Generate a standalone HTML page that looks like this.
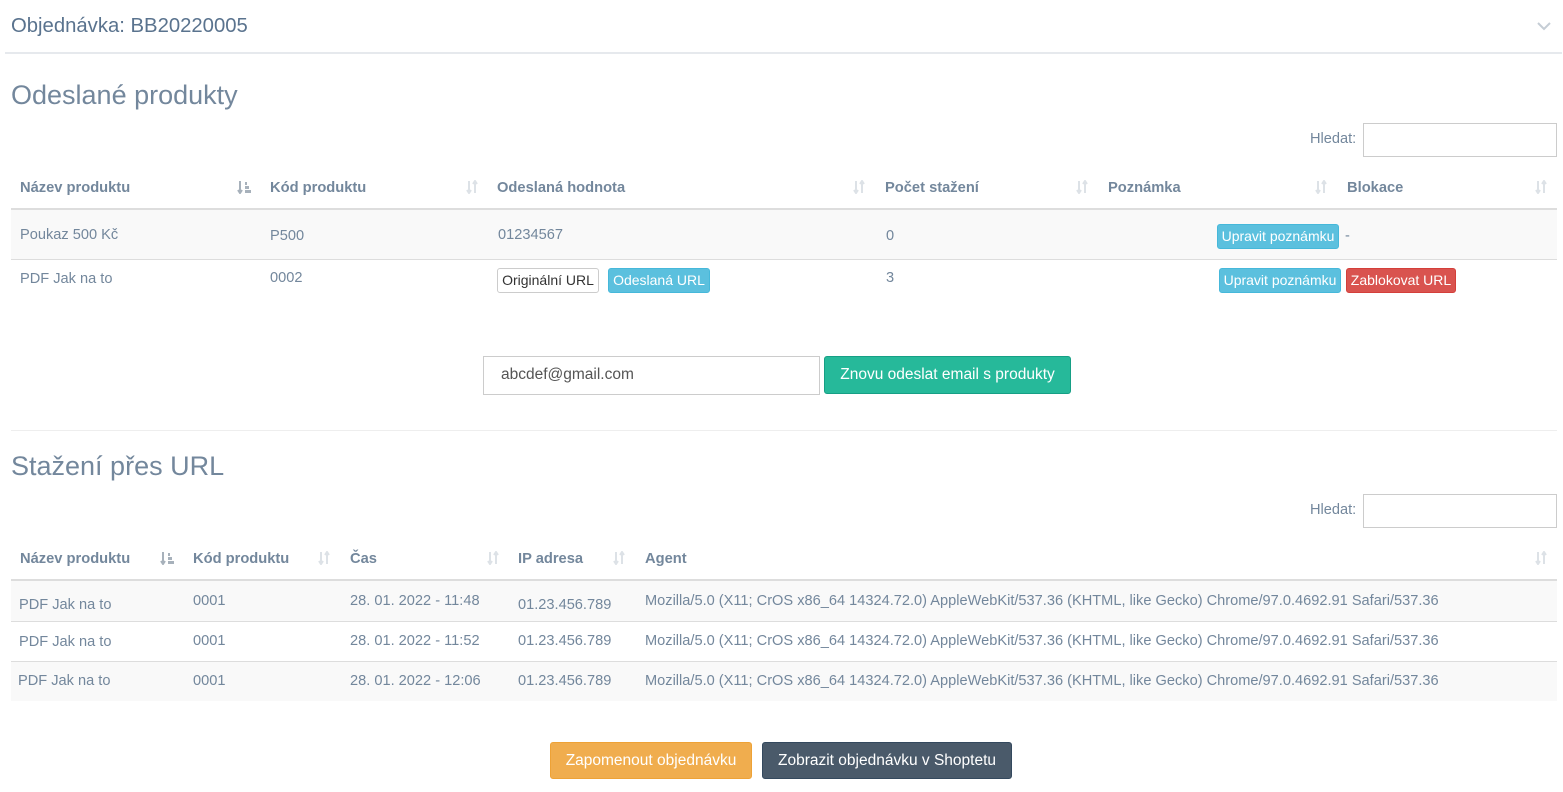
<!DOCTYPE html>
<html><head><meta charset="utf-8"><style>
*{box-sizing:border-box;margin:0;padding:0}
body{width:1563px;height:792px;background:#fff;font-family:"Liberation Sans",Arial,sans-serif;color:#73879C;font-size:14.6px;position:relative;overflow:hidden}
.a{position:absolute;white-space:nowrap}
.h{font-weight:bold;color:#73879C;font-size:14.7px}
.btn{position:absolute;border-radius:3px;font-size:14px;color:#fff;text-align:center;white-space:nowrap}
.info{background:#5bc0de;border:1px solid #46b8da}
.line{position:absolute;left:11px;width:1546px}
.si{position:absolute;width:14px;height:14px}
input{position:absolute;border:1px solid #ccc;background:#fff}
</style></head><body>
<div class="a" style="left:11px;top:15px;font-size:20.3px;color:#5A738E">Objednávka: BB20220005</div>
<svg class="a" style="left:1537px;top:21px" width="14" height="10" viewBox="0 0 14 10"><path d="M1 2l6 6 6-6" stroke="#c5cdd5" stroke-width="2" fill="none"/></svg>
<div class="a" style="left:5px;top:52px;width:1557px;height:2px;background:#E6E9ED"></div>
<div class="a" style="left:11px;top:80px;font-size:27px;color:#73879C">Odeslané produkty</div>
<div class="a" style="left:1310px;top:131px">Hledat:</div>
<input style="left:1363px;top:123px;width:194px;height:34px">

<div class="a h" style="left:20px;top:180px">Název produktu</div>
<div class="a h" style="left:270px;top:180px">Kód produktu</div>
<div class="a h" style="left:497px;top:180px">Odeslaná hodnota</div>
<div class="a h" style="left:885px;top:180px">Počet stažení</div>
<div class="a h" style="left:1108px;top:180px">Poznámka</div>
<div class="a h" style="left:1347px;top:180px">Blokace</div>
<svg class="si" style="left:237px;top:180px" viewBox="0 0 14 14"><path d="M3 1v11M1 10l2 3 2-3" stroke="#a7b1bb" stroke-width="2" fill="none"/><rect x="8" y="2" width="2" height="3" fill="#a7b1bb"/><rect x="8" y="6" width="4" height="3" fill="#a7b1bb"/><rect x="8" y="10" width="6" height="3" fill="#a7b1bb"/></svg>
<svg class="si" style="left:465px;top:180px" viewBox="0 0 14 14"><path d="M4 1v12M2 10l2 3 2-3M10 13V1M8 4l2-3 2 3" stroke="#dde2e7" stroke-width="2" fill="none"/></svg>
<svg class="si" style="left:852px;top:180px" viewBox="0 0 14 14"><path d="M4 1v12M2 10l2 3 2-3M10 13V1M8 4l2-3 2 3" stroke="#dde2e7" stroke-width="2" fill="none"/></svg>
<svg class="si" style="left:1075px;top:180px" viewBox="0 0 14 14"><path d="M4 1v12M2 10l2 3 2-3M10 13V1M8 4l2-3 2 3" stroke="#dde2e7" stroke-width="2" fill="none"/></svg>
<svg class="si" style="left:1314px;top:180px" viewBox="0 0 14 14"><path d="M4 1v12M2 10l2 3 2-3M10 13V1M8 4l2-3 2 3" stroke="#dde2e7" stroke-width="2" fill="none"/></svg>
<svg class="si" style="left:1534px;top:180px" viewBox="0 0 14 14"><path d="M4 1v12M2 10l2 3 2-3M10 13V1M8 4l2-3 2 3" stroke="#dde2e7" stroke-width="2" fill="none"/></svg>
<div class="line" style="top:208px;height:2px;background:#ddd"></div>
<div class="line" style="top:210px;height:49px;background:#f9f9f9"></div>
<div class="line" style="top:259px;height:1px;background:#ddd"></div>
<div class="a" style="left:20px;top:227px">Poukaz 500 Kč</div>
<div class="a" style="left:270px;top:228px">P500</div>
<div class="a" style="left:498px;top:227px">01234567</div>
<div class="a" style="left:886px;top:228px">0</div>
<div class="btn info" style="left:1217px;top:224px;width:122px;height:25px;line-height:23px">Upravit poznámku</div>
<div class="a" style="left:1345px;top:228px">-</div>
<div class="a" style="left:20px;top:271px">PDF Jak na to</div>
<div class="a" style="left:270px;top:270px">0002</div>
<div class="btn" style="left:497px;top:268px;width:102px;height:25px;line-height:23px;border:1px solid #ccc;color:#333;background:#fff">Originální URL</div>
<div class="btn info" style="left:608px;top:268px;width:102px;height:25px;line-height:23px">Odeslaná URL</div>
<div class="a" style="left:886px;top:270px">3</div>
<div class="btn info" style="left:1219px;top:268px;width:122px;height:25px;line-height:23px">Upravit poznámku</div>
<div class="btn" style="left:1346px;top:268px;width:110px;height:25px;line-height:23px;background:#d9534f;border:1px solid #d43f3a">Zablokovat URL</div>

<input style="left:483px;top:356px;width:337px;height:39px">
<div class="a" style="left:501px;top:366px;font-size:15.5px;color:#555">abcdef@gmail.com</div>
<div class="btn" style="left:824px;top:356px;width:247px;height:38px;line-height:36px;background:#26B99A;border:1px solid #169F85;font-size:15.5px">Znovu odeslat email s produkty</div>
<div class="line" style="top:430px;height:1px;background:#eee"></div>

<div class="a" style="left:11px;top:451px;font-size:27px">Stažení přes URL</div>
<div class="a" style="left:1310px;top:502px">Hledat:</div>
<input style="left:1363px;top:494px;width:194px;height:34px">
<div class="a h" style="left:20px;top:551px">Název produktu</div>
<div class="a h" style="left:193px;top:551px">Kód produktu</div>
<div class="a h" style="left:350px;top:551px">Čas</div>
<div class="a h" style="left:518px;top:551px">IP adresa</div>
<div class="a h" style="left:645px;top:551px">Agent</div>
<svg class="si" style="left:160px;top:551px" viewBox="0 0 14 14"><path d="M3 1v11M1 10l2 3 2-3" stroke="#a7b1bb" stroke-width="2" fill="none"/><rect x="8" y="2" width="2" height="3" fill="#a7b1bb"/><rect x="8" y="6" width="4" height="3" fill="#a7b1bb"/><rect x="8" y="10" width="6" height="3" fill="#a7b1bb"/></svg>
<svg class="si" style="left:317px;top:551px" viewBox="0 0 14 14"><path d="M4 1v12M2 10l2 3 2-3M10 13V1M8 4l2-3 2 3" stroke="#dde2e7" stroke-width="2" fill="none"/></svg>
<svg class="si" style="left:486px;top:551px" viewBox="0 0 14 14"><path d="M4 1v12M2 10l2 3 2-3M10 13V1M8 4l2-3 2 3" stroke="#dde2e7" stroke-width="2" fill="none"/></svg>
<svg class="si" style="left:612px;top:551px" viewBox="0 0 14 14"><path d="M4 1v12M2 10l2 3 2-3M10 13V1M8 4l2-3 2 3" stroke="#dde2e7" stroke-width="2" fill="none"/></svg>
<svg class="si" style="left:1534px;top:551px" viewBox="0 0 14 14"><path d="M4 1v12M2 10l2 3 2-3M10 13V1M8 4l2-3 2 3" stroke="#dde2e7" stroke-width="2" fill="none"/></svg>
<div class="line" style="top:579px;height:2px;background:#ddd"></div>
<div class="line" style="top:581px;height:40px;background:#f9f9f9"></div>
<div class="line" style="top:621px;height:1px;background:#ddd"></div>
<div class="line" style="top:661px;height:1px;background:#ddd"></div>
<div class="line" style="top:662px;height:39px;background:#f9f9f9"></div>
<div class="a" style="left:19px;top:597px">PDF Jak na to</div>
<div class="a" style="left:193px;top:593px">0001</div>
<div class="a" style="left:350px;top:593px">28. 01. 2022 - 11:48</div>
<div class="a" style="left:518px;top:597px">01.23.456.789</div>
<div class="a" style="left:645px;top:593px">Mozilla/5.0 (X11; CrOS x86_64 14324.72.0) AppleWebKit/537.36 (KHTML, like Gecko) Chrome/97.0.4692.91 Safari/537.36</div>
<div class="a" style="left:19px;top:634px">PDF Jak na to</div>
<div class="a" style="left:193px;top:633px">0001</div>
<div class="a" style="left:350px;top:633px">28. 01. 2022 - 11:52</div>
<div class="a" style="left:518px;top:633px">01.23.456.789</div>
<div class="a" style="left:645px;top:633px">Mozilla/5.0 (X11; CrOS x86_64 14324.72.0) AppleWebKit/537.36 (KHTML, like Gecko) Chrome/97.0.4692.91 Safari/537.36</div>
<div class="a" style="left:18px;top:673px">PDF Jak na to</div>
<div class="a" style="left:193px;top:673px">0001</div>
<div class="a" style="left:350px;top:673px">28. 01. 2022 - 12:06</div>
<div class="a" style="left:518px;top:673px">01.23.456.789</div>
<div class="a" style="left:645px;top:673px">Mozilla/5.0 (X11; CrOS x86_64 14324.72.0) AppleWebKit/537.36 (KHTML, like Gecko) Chrome/97.0.4692.91 Safari/537.36</div>

<div class="btn" style="left:550px;top:742px;width:202px;height:37px;line-height:35px;background:#f0ad4e;border:1px solid #eea236;font-size:15.5px">Zapomenout objednávku</div>
<div class="btn" style="left:762px;top:742px;width:250px;height:37px;line-height:35px;background:#4a5a6a;border:1px solid #34495e;font-size:15.5px">Zobrazit objednávku v Shoptetu</div>
</body></html>
